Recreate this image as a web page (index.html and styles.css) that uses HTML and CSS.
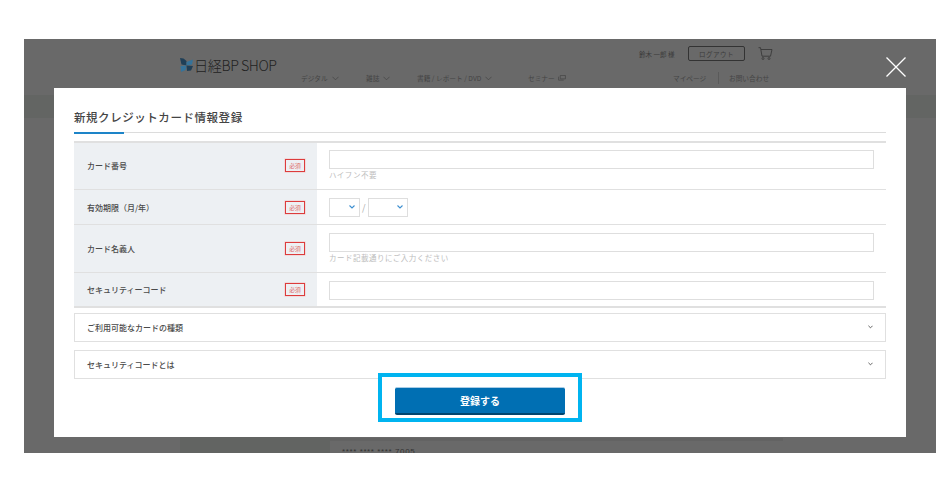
FILE: index.html
```html
<!DOCTYPE html>
<html lang="ja">
<head>
<meta charset="utf-8">
<title>新規クレジットカード情報登録</title>
<link rel="stylesheet" href="styles.css">
</head>
<body>
<div class="stage">
  <header class="site-header">
    <div class="logo">
      <svg class="logo-mark" viewBox="0 0 13 14" width="13" height="14" aria-hidden="true">
        <path fill="#1f3f57" d="M0 0l3.500.5 3 2.500v4.500L1.500 6.500z"/>
        <path fill="#35739a" d="M6.500 4L13 1.500 12 6.500l-5.500 1z"/>
        <path fill="#35739a" d="M0.500 8L6.500 7.500 5.500 12 1 14z"/>
        <path fill="#1f3f57" d="M6.500 7.500L13 8l-2 4.500-4 .5z"/>
      </svg>
      <span class="logo-text">日経BP SHOP</span>
    </div>
    <div class="header-right">
      <div class="header-top">
        <span class="user">鈴木 一郎 様</span>
        <span class="logout">ログアウト</span>
        <svg class="cart" viewBox="0 0 15 13" width="15" height="13" aria-hidden="true">
          <path fill="none" stroke="#333" stroke-width=".8" d="M.5.700h2l1.500 8.500h8.500L14 2.500H3"/>
          <circle cx="5" cy="11.500" r="1" fill="none" stroke="#333" stroke-width=".7"/>
          <circle cx="11" cy="11.500" r="1" fill="none" stroke="#333" stroke-width=".7"/>
        </svg>
      </div>
      <nav class="nav">
        <span class="nav-item nav-digital">デジタル <svg class="nav-chev" viewBox="0 0 8 5" width="7" height="5"><path d="M.5.500L4 4 7.500.500" fill="none" stroke="#444" stroke-width=".8"/></svg></span>
        <span class="nav-item nav-mag">雑誌 <svg class="nav-chev" viewBox="0 0 8 5" width="7" height="5"><path d="M.5.500L4 4 7.500.500" fill="none" stroke="#444" stroke-width=".8"/></svg></span>
        <span class="nav-item nav-book">書籍 / レポート / DVD <svg class="nav-chev" viewBox="0 0 8 5" width="7" height="5"><path d="M.5.500L4 4 7.500.500" fill="none" stroke="#444" stroke-width=".8"/></svg></span>
        <span class="nav-item nav-seminar">セミナー <svg class="nav-chev" viewBox="0 0 9 7" width="8" height="6"><path d="M2.500.500h6v4h-6zM.5 2v4h6" fill="none" stroke="#444" stroke-width=".8"/></svg></span>
        <span class="nav-item nav-mypage">マイページ</span>
        <span class="nav-item nav-contact">お問い合わせ</span>
      </nav>
    </div>
  </header>
  <div class="band"></div>
  <div class="page-body">
    <div class="side"></div>
    <div class="main-col">
      <div class="strip"></div>
      <div class="card-number">**** **** **** 7005</div>
    </div>
  </div>

  <svg class="close" viewBox="0 0 20 20" width="20" height="20" aria-label="閉じる">
    <path d="M.5.500l19 19M19.500.500l-19 19" stroke="#fff" stroke-width="1.300" fill="none"/>
  </svg>

  <section class="modal">
    <h1 class="title"><span class="title-text">新規クレジットカード情報登録</span></h1>
    <div class="form-table">
      <div class="row row-first">
        <div class="label"><span>カード番号</span><span class="req">必須</span></div>
        <div class="field">
          <input class="text-input" type="text">
          <p class="hint">ハイフン不要</p>
        </div>
      </div>
      <div class="row row-short">
        <div class="label"><span>有効期限（月/年）</span><span class="req">必須</span></div>
        <div class="field field-date">
          <div class="select-wrap sel-month">
            <select class="select"><option></option></select>
            <svg class="sel-chev" viewBox="0 0 6 4" width="6" height="4"><path d="M.5.500L3 3 5.500.500" fill="none" stroke="#3d8fd0" stroke-width="1.100"/></svg>
          </div>
          <span class="slash">/</span>
          <div class="select-wrap sel-year">
            <select class="select"><option></option></select>
            <svg class="sel-chev" viewBox="0 0 6 4" width="6" height="4"><path d="M.5.500L3 3 5.500.500" fill="none" stroke="#3d8fd0" stroke-width="1.100"/></svg>
          </div>
        </div>
      </div>
      <div class="row row-tall">
        <div class="label"><span>カード名義人</span><span class="req">必須</span></div>
        <div class="field">
          <input class="text-input" type="text">
          <p class="hint">カード記載通りにご入力ください</p>
        </div>
      </div>
      <div class="row row-short row-last">
        <div class="label"><span>セキュリティーコード</span><span class="req">必須</span></div>
        <div class="field">
          <input class="text-input" type="text">
        </div>
      </div>
    </div>
    <div class="accordion accordion-first">
      <span>ご利用可能なカードの種類</span>
      <svg viewBox="0 0 6 4" width="5" height="4"><path d="M.5.500L3 3 5.500.500" fill="none" stroke="#444" stroke-width="1"/></svg>
    </div>
    <div class="accordion accordion-second">
      <span>セキュリティコードとは</span>
      <svg viewBox="0 0 6 4" width="5" height="4"><path d="M.5.500L3 3 5.500.500" fill="none" stroke="#444" stroke-width="1"/></svg>
    </div>
    <div class="actions">
      <div class="focus-ring"><button class="submit" type="button">登録する</button></div>
    </div>
  </section>
</div>
</body>
</html>
```
FILE: styles.css
```css
* { box-sizing: border-box; }
html, body { margin: 0; padding: 0; background: #fff; }
body { font-family: "Noto Sans CJK JP", "Noto Sans", sans-serif; }

.stage {
  position: relative;
  width: 912px;
  height: 414px;
  margin: 39px 0 0 24px;
  background: #696969;
  overflow: hidden;
  display: flex;
  flex-direction: column;
}

/* site behind the overlay */
.site-header {
  height: 56px;
  flex: none;
  display: flex;
  padding-left: 156px;
}
.logo {
  width: 120px;
  height: 32px;
  margin-top: 10px;
  display: flex;
  align-items: center;
  gap: 1px;
  flex: none;
}
.logo-text {
  font-family: "Noto Sans CJK JP", sans-serif;
  font-weight: 300;
  font-size: 14.200px;
  letter-spacing: -.45px;
  color: #222;
  white-space: nowrap;
}
.header-right { flex: 1; display: flex; flex-direction: column; }
.header-top {
  display: flex;
  align-items: center;
  height: 15px;
  margin-top: 7px;
  padding-left: 339px;
}
.user { font-size: 6.500px; color: #3c3c3c; width: 49px; white-space: nowrap; }
.logout {
  width: 57px;
  height: 15px;
  border: 1px solid #333;
  border-radius: 2px;
  font-size: 6.500px;
  color: #3c3c3c;
  display: flex;
  align-items: center;
  justify-content: center;
  letter-spacing: .5px;
}
.cart { margin-left: 13px; }
.nav {
  display: flex;
  align-items: center;
  height: 12px;
  margin-top: 11px;
  font-size: 6.700px;
  color: #454545;
  padding-left: 1px;
  white-space: nowrap;
}
.nav-item { display: flex; align-items: center; gap: 4px; }
.nav-digital { width: 65px; }
.nav-mag { width: 51px; }
.nav-book { width: 111px; }
.nav-seminar { width: 145px; gap: 3px; }
.nav-mypage { width: 46px; border-right: 1px solid #5a5a5a; height: 12px; margin-right: 10px; }
.band { height: 23px; flex: none; background: #636563; }
.page-body { flex: 1; display: flex; padding-left: 156px; min-height: 0; }
.side { width: 150px; background: #626462; flex: none; }
.main-col {
  flex: 1;
  display: flex;
  flex-direction: column;
  justify-content: flex-end;
  align-items: flex-start;
}
.strip { width: 453px; height: 3px; background: #636363; margin-bottom: 9px; }
.card-number {
  font-family: "Liberation Sans", sans-serif;
  font-size: 8px;
  line-height: 4px;
  height: 3px;
  letter-spacing: .6px;
  color: #333;
  margin-left: 12px;
}

/* close button over the overlay */
.close { position: absolute; left: 862px; top: 18px; }

/* modal */
.modal {
  position: absolute;
  left: 30px;
  top: 49px;
  width: 852px;
  height: 349px;
  background: #fff;
  padding: 0 20px;
}
.title {
  margin: 0;
  height: 45px;
  padding-top: 18px;
  border-bottom: 1px solid #dcdcdc;
  display: flex;
}
.title-text {
  font-size: 11.500px;
  font-weight: 500;
  letter-spacing: .55px;
  line-height: 22px;
  height: 27px;
  width: 50px;
  white-space: nowrap;
  color: #444;
  position: relative;
}
.title-text::after {
  content: "";
  position: absolute;
  left: 0;
  bottom: -1px;
  width: 50px;
  height: 2px;
  background: #1d84c8;
}
.form-table {
  margin-top: 8px;
  border-top: 2px solid #e0e0e0;
}
.row {
  display: flex;
  border-bottom: 1px solid #e0e0e0;
}
.row-first { height: 47px; }
.row-tall { height: 48px; }
.row-short { height: 35px; }
.row-last { border-bottom-width: 2px; }
.label {
  width: 243px;
  flex: none;
  background: #edf0f3;
  padding: 0 12px 0 13px;
  display: flex;
  align-items: center;
  justify-content: space-between;
  font-size: 8px;
  font-weight: 500;
  color: #4a4a4a;
  white-space: nowrap;
}
.row-first .label { padding-bottom: 2px; }
.req {
  width: 20px;
  height: 13px;
  border: 1px solid #dc3c3c;
  box-shadow: 0 0 0 .5px #f3c4c4;
  color: #dd6a6a;
  font-size: 5.800px;
  font-weight: 400;
  display: flex;
  align-items: center;
  justify-content: center;
}
.field { flex: 1; padding: 8px 12px 0; }
.row-first .field { padding-top: 7px; }
.text-input {
  display: block;
  width: 100%;
  height: 19px;
  border: 1px solid #dedede;
  border-radius: 0;
  background: #fff;
  padding: 0;
  outline: none;
}
.hint {
  margin: 0;
  font-size: 7.500px;
  line-height: 11px;
  letter-spacing: .5px;
  color: #bdbdbd;
  white-space: nowrap;
}
.field-date { display: flex; align-items: flex-start; }
.select-wrap { position: relative; height: 19px; }
.sel-month { width: 31px; }
.sel-year { width: 40px; }
.select {
  appearance: none;
  -webkit-appearance: none;
  width: 100%;
  height: 100%;
  display: block;
  border: 1px solid #dedede;
  border-radius: 0;
  background: #fff;
  padding: 0;
  outline: none;
}
.sel-chev { position: absolute; right: 5px; top: 7px; }
.slash {
  width: 8px;
  text-align: left;
  font-size: 9px;
  line-height: 19px;
  color: #aaa;
  padding-left: 2px;
}
.accordion {
  height: 29px;
  border: 1px solid #e0e0e0;
  padding: 0 12px 1px;
  display: flex;
  align-items: center;
  justify-content: space-between;
  font-size: 8px;
  font-weight: 500;
  color: #4a4a4a;
}
.accordion-first { margin-top: 5px; }
.accordion-second { margin-top: 8px; }
.actions {
  display: flex;
  justify-content: center;
  margin-top: -6px;
}
.focus-ring {
  width: 204px;
  height: 49px;
  border: 4px solid #00b4f0;
  background: #fff;
  display: flex;
  align-items: center;
  justify-content: center;
  position: relative;
}
.submit {
  width: 170px;
  height: 28px;
  margin-top: 7px;
  border: 0;
  border-top: 1px solid #a9cde6;
  border-bottom: 2px solid #00456f;
  border-radius: 2px;
  background: #006fb3;
  color: #fff;
  font-family: inherit;
  font-size: 10px;
  font-weight: 700;
  padding: 0;
}
```
